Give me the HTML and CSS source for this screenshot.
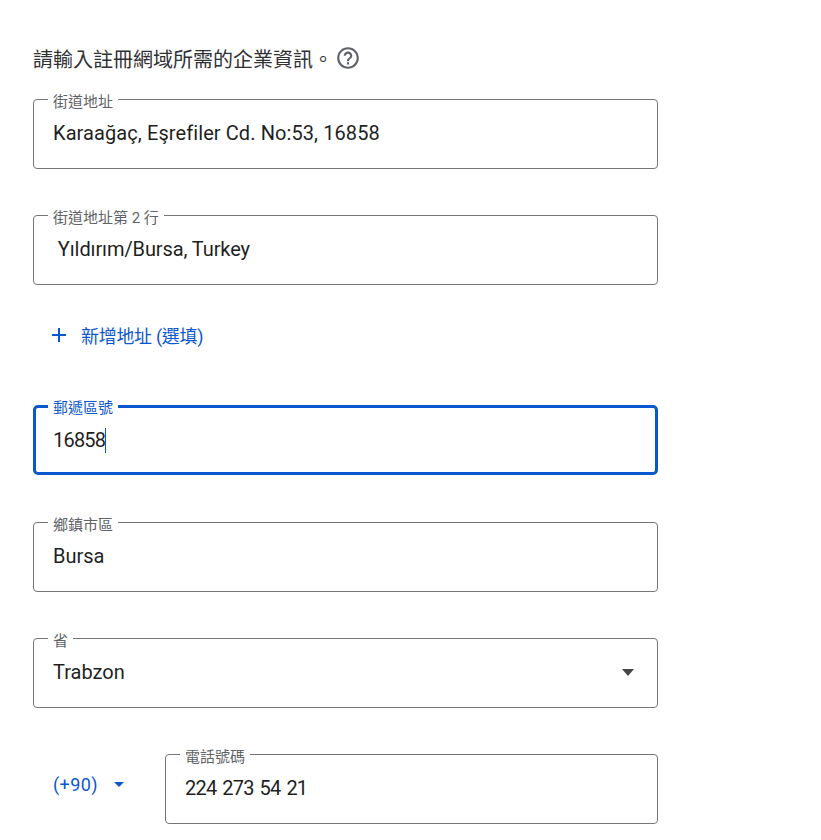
FILE: index.html
```html
<!DOCTYPE html>
<html lang="zh-Hant">
<head>
    <meta charset="UTF-8">
    <title>企業資訊</title>
    <link rel="stylesheet" href="styles.css">
</head>
<body>

<div class="form">
    <div class="intro">
        <span>請輸入註冊網域所需的企業資訊。</span>
        <svg class="help-icon" viewBox="0 0 24 24" width="26" height="26">
            <path fill="#5f6368" d="M11 18h2v-2h-2v2zm1-16C6.48 2 2 6.48 2 12s4.48 10 10 10 10-4.48 10-10S17.52 2 12 2zm0 18c-4.41 0-8-3.59-8-8s3.59-8 8-8 8 3.59 8 8-3.59 8-8 8zm0-14c-2.21 0-4 1.79-4 4h2c0-1.1.9-2 2-2s2 .9 2 2c0 2-3 1.75-3 5h2c0-2.25 3-2.5 3-5 0-2.21-1.79-4-4-4z"/>
        </svg>
    </div>

    <div class="field">
        <label>街道地址</label>
        <div class="value address">Karaağaç, Eşrefiler Cd. No:53, 16858</div>
    </div>

    <div class="field">
        <label>街道地址第 2 行</label>
        <div class="value city">&nbsp;Yıldırım/Bursa, Turkey</div>
    </div>

    <div class="add-line">
        <svg viewBox="0 0 16 16" width="16" height="16">
            <path fill="#0b57d0" d="M7 1h2v6h6v2H9v6H7V9H1V7h6z"/>
        </svg>
        <span>新增地址 (選填)</span>
    </div>

    <div class="field focused">
        <label>郵遞區號</label>
        <div class="value digits">16858<span class="caret"></span></div>
    </div>

    <div class="field">
        <label>鄉鎮市區</label>
        <div class="value">Bursa</div>
    </div>

    <div class="field select">
        <label>省</label>
        <div class="value">Trabzon</div>
        <span class="arrow"></span>
    </div>

    <div class="phone-row">
        <div class="country">
            <span>(+90)</span>
            <span class="arrow small"></span>
        </div>
        <div class="field">
            <label>電話號碼</label>
            <div class="value digits">224 273 54 21</div>
        </div>
    </div>
</div>

</body>
</html>
```

FILE: styles.css
```css
body {
    margin: 0;
    background-color: #fff;
    color: #1f1f1f;
    font-family: Roboto, "Noto Sans CJK TC", sans-serif;
}
.form {
    width: 625px;
    padding: 44px 0 0 33px;
}
.intro {
    display: flex;
    align-items: center;
    height: 28px;
    margin-bottom: 27px;
    font-size: 20px;
    color: #303134;
}
.help-icon {
    margin-left: 2px;
}
.field {
    position: relative;
    box-sizing: border-box;
    height: 70px;
    margin-bottom: 46px;
    padding: 20px 19px 0;
    border: 1px solid #747775;
    border-radius: 4px;
}
.field label {
    position: absolute;
    top: -6px;
    left: 14px;
    padding: 0 5px;
    background-color: #fff;
    font-size: 15px;
    line-height: 16px;
    color: #5f6368;
}
.value {
    font-size: 20px;
    line-height: 26px;
}
.address {
    letter-spacing: 0.09px;
}
.city {
    letter-spacing: -0.1px;
}
.digits {
    letter-spacing: -0.8px;
    word-spacing: 1.8px;
}
.add-line {
    display: flex;
    align-items: center;
    height: 28px;
    margin: -46px 0 56px;
    padding: 36px 0 0 18px;
    font-size: 18px;
    color: #0b57d0;
    letter-spacing: -0.3px;
}
.add-line span {
    margin-left: 14px;
}
.focused {
    margin-bottom: 47px;
    padding: 19px 17px 0;
    border: 3px solid #0b57d0;
    border-radius: 5px;
}
.focused label {
    top: -8px;
    left: 12px;
    color: #0b57d0;
}
.caret {
    display: inline-block;
    width: 1px;
    height: 25px;
    background-color: #0b57d0;
    vertical-align: -6px;
}
.arrow {
    position: absolute;
    top: 30px;
    right: 23px;
    border-top: 7px solid #444746;
    border-left: 6px solid transparent;
    border-right: 6px solid transparent;
}
.phone-row {
    display: flex;
    align-items: flex-start;
}
.phone-row .field {
    flex: 1;
    margin-bottom: 0;
}
.country {
    display: flex;
    align-items: center;
    width: 132px;
    height: 60px;
    padding-left: 20px;
    box-sizing: border-box;
    font-size: 18px;
    letter-spacing: 0.4px;
    color: #0b57d0;
}
.arrow.small {
    position: static;
    margin-left: 16px;
    border-top-width: 5px;
    border-left-width: 5px;
    border-right-width: 5px;
    border-top-color: #0b57d0;
}
```
